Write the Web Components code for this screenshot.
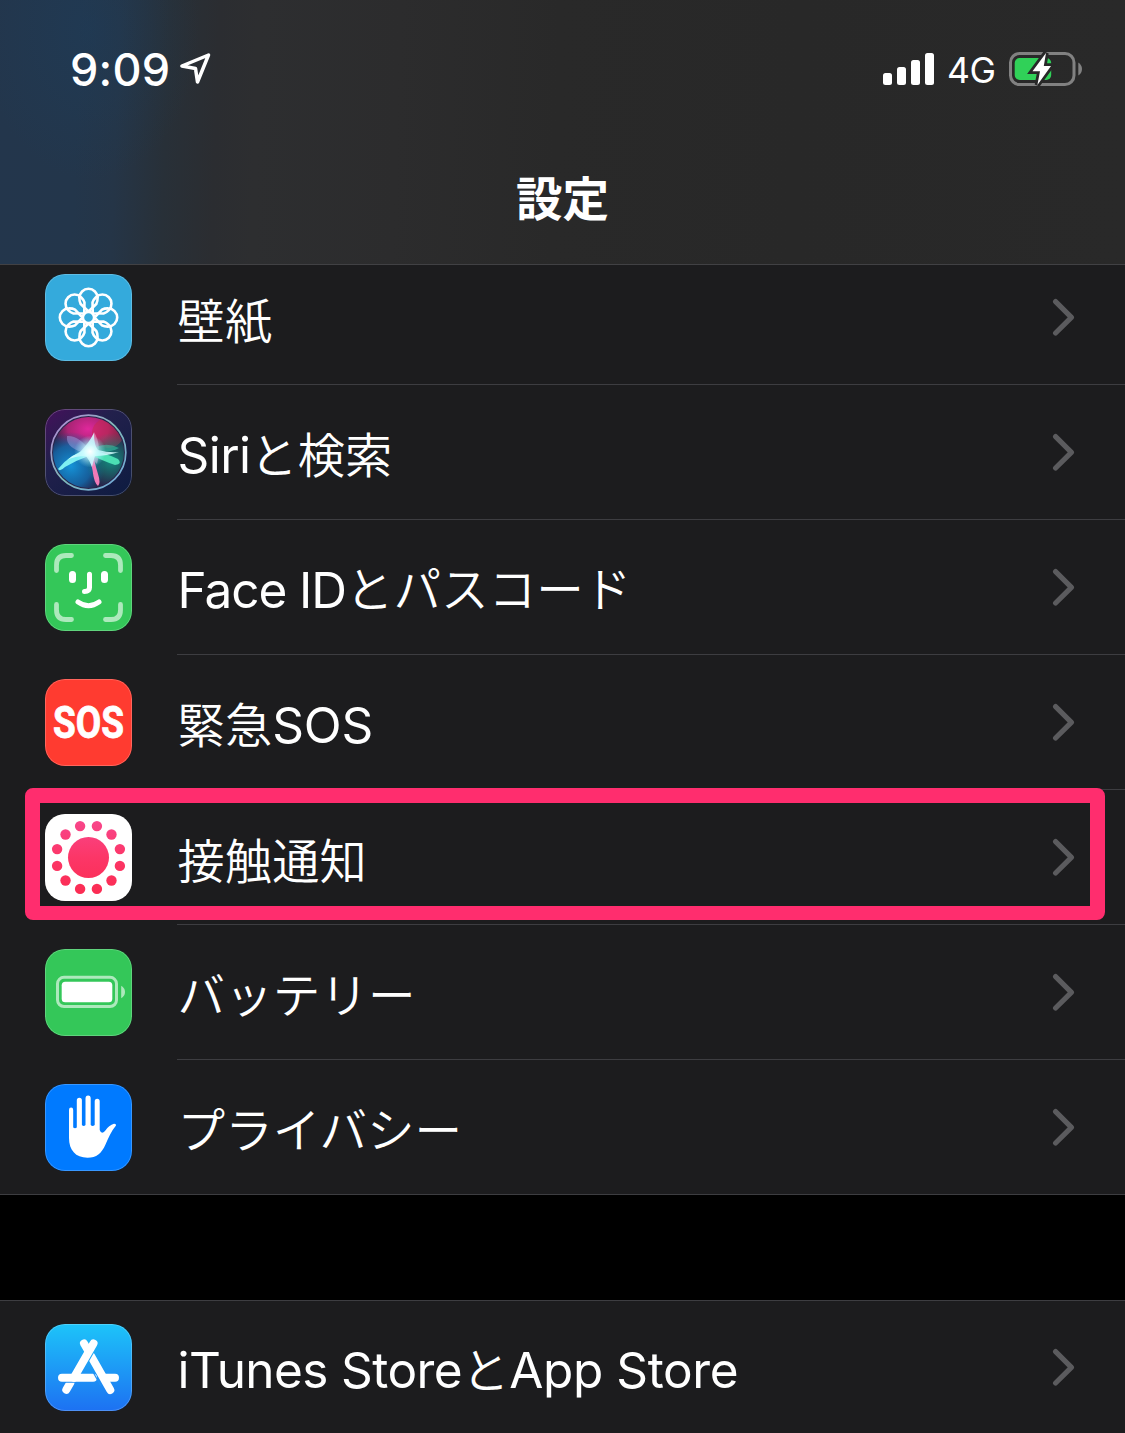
<!DOCTYPE html>
<html lang="ja">
<head>
<meta charset="utf-8">
<title>設定</title>
<style>
html,body{margin:0;padding:0;background:#000;overflow:hidden}
body{width:1125px;height:1433px;font-family:Inter,"Noto Sans CJK JP",sans-serif;color:#fff}
</style>
</head>
<body>
<settings-screen></settings-screen>
<script>
const define=(name,html)=>customElements.define(name,class extends HTMLElement{
  connectedCallback(){
    if(this.shadowRoot)return;
    this.attachShadow({mode:'open'}).innerHTML=typeof html==='function'?html(this):html;
  }
});

const ring=(n,offset,fn)=>Array.from({length:n},(_,i)=>fn(offset+i*360/n)).join('');

const ICONS={
wallpaper:`<rect width="87" height="87" fill="#34aadc"/><g fill="none" stroke="#fff" stroke-width="2.6" stroke-linejoin="round" transform="translate(43.5 43.5)">${ring(8,0,a=>`<path transform="rotate(${a})" d="M0 -6L-7.8 -13.5Q-9.2 -16 -9.1 -19.6A9.1 9.1 0 0 1 9.1 -19.6Q9.2 -16 7.8 -13.5Z"/>`)}<circle r="5.6"/></g>`,
siri:`<defs>
<linearGradient id="bg" x1="0" y1="0" x2=".8" y2="1"><stop offset="0" stop-color="#45105c"/><stop offset=".4" stop-color="#22204c"/><stop offset="1" stop-color="#101c42"/></linearGradient>
<linearGradient id="rim" x1="0" y1="0" x2="1" y2="1"><stop offset="0" stop-color="#b884d8"/><stop offset=".5" stop-color="#80b9b8"/><stop offset="1" stop-color="#70a7df"/></linearGradient>
<radialGradient id="pink"><stop offset="0" stop-color="#e0289c"/><stop offset=".55" stop-color="#c0247c" stop-opacity=".85"/><stop offset="1" stop-color="#a01c60" stop-opacity="0"/></radialGradient>
<radialGradient id="blue"><stop offset="0" stop-color="#1593d8"/><stop offset=".6" stop-color="#126db0" stop-opacity=".8"/><stop offset="1" stop-color="#0b5595" stop-opacity="0"/></radialGradient>
<radialGradient id="green"><stop offset="0" stop-color="#128c80"/><stop offset="1" stop-color="#118f7a" stop-opacity="0"/></radialGradient>
<radialGradient id="glow"><stop offset="0" stop-color="#fff"/><stop offset=".3" stop-color="#dff" stop-opacity=".85"/><stop offset="1" stop-color="#8ef" stop-opacity="0"/></radialGradient>
<clipPath id="orb"><circle cx="43.5" cy="43.5" r="35.5"/></clipPath></defs>
<rect width="87" height="87" fill="url(#bg)"/><circle cx="43.5" cy="43.5" r="37" fill="#28244a"/>
<g clip-path="url(#orb)"><ellipse cx="43" cy="20" rx="37" ry="27" fill="url(#pink)"/><ellipse cx="63" cy="24" rx="16" ry="15" fill="#c9284c" opacity=".5"/><circle cx="26" cy="57" r="34" fill="url(#blue)"/><circle cx="66" cy="51" r="27" fill="url(#green)"/><path d="M46 43Q34 26 22 27Q20 40 44 45Z" fill="#a9a8e8" opacity=".45"/><path d="M40 43L49 23Q57 36 52 55Z" fill="#f2b0d9" opacity=".5"/><path d="M44 43Q58 31 74 39Q67 44 44 43Z" fill="#39d0aa" opacity=".5"/></g>
<path d="M44 41Q58 43 73 50Q78 55 70 56Q58 52 44 45Z" fill="#4be0b4"/><path d="M44 40Q26 44 13 60Q15 63 20 58Q32 51 46 46Z" fill="#7ff0f2"/><path d="M42 43Q46 52 47.5 61Q49 74 53 77Q56 74 53 65Q49 52 48 43Z" fill="#f07ab8"/><path d="M34 44Q44 34 49 24Q49 37 53 41Q64 44 74 43Q62 47 50 47Q48 53 47 58Q45 52 41 47Q30 47 22 51Q28 46 34 44Z" fill="#d6fbff" opacity=".85"/><circle cx="45" cy="42.5" r="16" fill="url(#glow)"/>
<circle cx="43.5" cy="43.5" r="37.3" fill="none" stroke="url(#rim)" stroke-width="1.7"/>`,
face:`<rect width="87" height="87" fill="#34c759"/><g fill="none" stroke="#fff" stroke-linecap="round"><path d="M11.5 26.5V21Q11.5 11.5 21 11.5H26.5M60.5 11.5H66Q75.5 11.5 75.5 21V26.5M75.5 60.5V66Q75.5 75.5 66 75.5H60.5M26.5 75.5H21Q11.5 75.5 11.5 66V60.5" stroke-width="4.8" opacity=".6"/><path d="M27.5 30.5V35.5M59.5 30.5V35.5" stroke-width="7"/><path d="M44.5 30.3V43.5Q44.5 47.5 39.5 47.5" stroke-width="5"/><path d="M33 58Q43.5 65.5 54 58" stroke-width="5"/></g>`,
sos:`<rect width="87" height="87" fill="#ff3b30"/><g transform="translate(43.5 59.2) scale(.84 1)"><text text-anchor="middle" font-family="Roboto,sans-serif" font-weight="700" font-size="44" fill="#fff" stroke="#fff" stroke-width=".8">SOS</text></g>`,
exposure:`<defs><linearGradient id="dot" gradientUnits="userSpaceOnUse" x1="0" y1="-37" x2="0" y2="37"><stop stop-color="#f8468b"/><stop offset=".5" stop-color="#fc3667"/><stop offset="1" stop-color="#fb2c52"/></linearGradient></defs><rect width="87" height="87" fill="#fff"/><g transform="translate(43.5 43.5)" fill="url(#dot)"><circle r="20.5"/>${ring(12,15,a=>{const r=a*Math.PI/180;return `<circle cx="${(32.5*Math.sin(r)).toFixed(2)}" cy="${(32.5*Math.cos(r)).toFixed(2)}" r="5.2"/>`})}</g>`,
battery:`<rect width="87" height="87" fill="#34c759"/><rect x="12.5" y="28.3" width="59" height="29.2" rx="6.5" fill="none" stroke="#fff" stroke-opacity=".6" stroke-width="3"/><rect x="16.7" y="32.7" width="50.6" height="20.5" rx="3.5" fill="#fff"/><path d="M76.2 36.8Q80 39 80 43T76.2 49.2Z" fill="#fff" fill-opacity=".6"/>`,
hand:`<rect width="87" height="87" fill="#007aff"/><path fill="#fff" d="M24 26a2 2.3 0 0 1 4.2 0V43.5Q30 45 31.8 43.5V16.5a2.5 2.7 0 0 1 5.1 0V41Q38.7 43 40.5 41V14.5a2.6 2.9 0 0 1 5.2 0V41Q47.5 43 49.7 41V17.5a2.5 2.7 0 0 1 5 0V46Q56.5 51 60 47Q64 41 69 39.8Q71.5 39.7 71 41.5C66 47 63.5 54 60.5 60.5C56.5 69.5 51.5 73.7 42.5 73.7C30.5 73.7 24 66 24 54Z"/>`,
store:`<defs><linearGradient id="sky" x1="0" y1="0" x2="0" y2="1"><stop stop-color="#1dc4f9"/><stop offset="1" stop-color="#1d71f2"/></linearGradient>
<mask id="cut" maskUnits="userSpaceOnUse" x="0" y="0" width="87" height="87"><rect width="87" height="87" fill="#fff"/><path d="M48.5 19.5L28.8 53.7M17 53.7H50" stroke="#000" stroke-width="10" fill="none"/></mask>
<mask id="leg" maskUnits="userSpaceOnUse" x="0" y="0" width="87" height="87"><rect width="87" height="87" fill="#fff"/><path d="M48.5 19.5L28.8 53.7" stroke="#000" stroke-width="10" fill="none"/></mask></defs><rect width="87" height="87" fill="url(#sky)"/>
<g fill="none" stroke="#fff" stroke-width="8" stroke-linecap="round"><path d="M46 32L65.3 66" mask="url(#leg)"/><path d="M25.5 58.5L21.3 65.8" mask="url(#cut)"/><path d="M60 53.7H70"/><path d="M39 19.5L42.5 25.5"/><path d="M48.5 19.5L28.8 53.7"/><path d="M17 53.7H48"/></g><path d="M48.5 49L56 62" stroke="#2190f7" stroke-width="1.2"/>`
};

define('app-icon',el=>`<style>:host{display:block;flex:none;width:87px;height:87px;border-radius:20px;overflow:hidden;position:relative}
:host::after{content:"";position:absolute;inset:0;border-radius:20px;border:1px solid rgba(255,255,255,.22)}svg{display:block}</style><svg width="87" height="87" viewBox="0 0 87 87">${ICONS[el.getAttribute('name')]}</svg>`);

define('settings-row',el=>`<style>
:host{display:flex;height:135px;align-items:center;padding-left:45px;box-sizing:border-box;position:relative}
.body{flex:1;align-self:stretch;margin-left:45px;display:flex;align-items:center;justify-content:space-between;border-bottom:1px solid #3d3d41;box-sizing:border-box;padding-right:50px}
:host([last]) .body{border-bottom-color:transparent}
.label{display:flex;align-items:baseline;white-space:nowrap;line-height:60px;padding:4px 0 0 .6px}
.mark{display:none;position:absolute;left:25px;top:-2px;width:1080px;height:132px;box-sizing:border-box;border:15px solid #ff2d6e;border-bottom-width:14.5px;border-radius:8px}
:host([marked]) .mark{display:block}
svg{display:block}
</style><app-icon name="${el.getAttribute('icon')}"></app-icon><div class="body"><div class="label"><slot></slot></div><svg width="24" height="40" viewBox="0 0 24 40"><path d="M4.6 4.6L20.4 20.3L4.6 36" fill="none" stroke="#5b5b5e" stroke-width="5.2" stroke-linecap="round" stroke-linejoin="round"/></svg></div><div class="mark"></div>`);

define('text-run',`<style>:host{display:block;font-size:49.5px;letter-spacing:var(--track,-.6px)}
:host([kanji]),:host([kana]){font-family:"Noto Sans CJK JP",sans-serif;font-weight:350;font-size:47.2px;letter-spacing:.15px}
:host([kana]){font-size:47.6px;letter-spacing:0;transform:translateY(-1px)}</style><slot></slot>`);

define('settings-group',`<style>:host{display:flex;flex-direction:column;background:#1c1c1e;box-sizing:border-box}:host([first]){margin-top:-15px;box-shadow:inset 0 -1px #3d3d41}:host([second]){margin-top:105px;box-shadow:inset 0 1px #3d3d41}</style><slot></slot>`);

define('status-bar',`<style>:host{display:flex;justify-content:space-between;align-items:center;padding:0 42px 0 70px;height:138px}
div{display:flex;align-items:center}.time{font-size:45px;font-weight:550;letter-spacing:.2px}.net{font-size:35.5px;font-weight:430;letter-spacing:-.4px;margin:3px 13.5px 0 12px}svg{display:block}</style>
<div><span class="time">9:09</span><svg style="margin-left:8.5px" width="34" height="34" viewBox="179 52 34 34"><path d="M181.9 66L208.5 55L197.5 82L195.5 68.5Z" fill="none" stroke="#fff" stroke-width="3.5" stroke-linejoin="round"/></svg></div>
<div><svg width="52" height="34" viewBox="882 52 52 34" fill="#fff"><rect x="882" y="73" width="9" height="12" rx="2.5"/><rect x="896" y="67" width="9" height="18" rx="2.5"/><rect x="910" y="60" width="9" height="25" rx="2.5"/><rect x="924" y="53" width="9" height="32" rx="2.5"/></svg><span class="net">4G</span>
<svg width="74" height="38" viewBox="1009 50 74 38"><rect x="1010.5" y="53.5" width="63.5" height="31" rx="9" fill="none" stroke="#818181" stroke-width="3"/><path d="M1078.3 62.5Q1082 65 1082 69T1078.3 75.5Z" fill="#818181"/><rect x="1014.7" y="58" width="36.5" height="22" rx="5" fill="#30d158"/><path d="M1046 53L1032.5 71.3H1040L1037.4 85L1051 66H1043.8Z" fill="#fff" stroke="#282828" stroke-width="5.5" paint-order="stroke"/></svg></div>`);

define('nav-header',`<style>:host{display:flex;flex-direction:column;height:265px;box-sizing:border-box;border-bottom:1px solid #414144;position:relative;z-index:1;
background:radial-gradient(ellipse 110px 150px at 90px 30px,rgba(27,64,98,.35),rgba(27,64,98,0)),linear-gradient(92deg,#23364c 0,#23364b 80px,#253547 120px,#283038 170px,#2b2d31 220px,#2d2e30 260px,#2c2c2d 400px,#292929 560px,#282828 800px,#292929)}
h1{margin:23px 0 0;text-align:center;font:700 46.5px/70px "Noto Sans CJK JP",sans-serif}</style><status-bar></status-bar><h1><slot></slot></h1>`);

define('settings-screen',`<style>:host{display:flex;flex-direction:column;width:1125px;height:1433px;overflow:hidden;background:#000}nav-header,settings-group{flex:none}</style>
<nav-header>設定</nav-header>
<settings-group first>
<settings-row icon="wallpaper"><text-run kanji>壁紙</text-run></settings-row>
<settings-row icon="siri"><text-run>Siri</text-run><text-run kanji>と検索</text-run></settings-row>
<settings-row icon="face"><text-run style="--track:-1.1px">Face ID</text-run><text-run kana>とパスコード</text-run></settings-row>
<settings-row icon="sos"><text-run kanji>緊急</text-run><text-run style="--track:-.2px">SOS</text-run></settings-row>
<settings-row icon="exposure" marked><text-run kanji>接触通知</text-run></settings-row>
<settings-row icon="battery"><text-run kana>バッテリー</text-run></settings-row>
<settings-row icon="hand" last><text-run kana>プライバシー</text-run></settings-row>
</settings-group>
<settings-group second>
<settings-row icon="store" last><text-run>iTunes Store</text-run><text-run kanji>と</text-run><text-run style="--track:-.4px">App Store</text-run></settings-row>
</settings-group>`);
</script>
</body>
</html>
